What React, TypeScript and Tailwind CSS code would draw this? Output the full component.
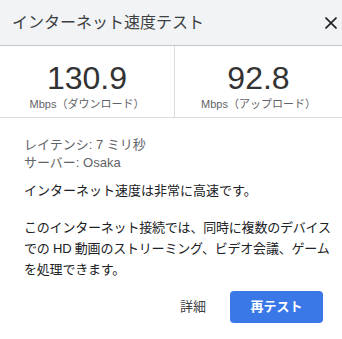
import React from 'react';

const jp = { fontFamily: '"Liberation Sans", "Noto Sans CJK JP", sans-serif' };

const Stat: React.FC<{ value: string; label: string; className?: string }> = ({ value, label, className }) => (
  <div className={`flex flex-col items-center pt-[16px] ${className ?? ''}`}>
    <div className="text-[32px] leading-[32px] text-[#333333]">{value}</div>
    <div className="mt-[3px] text-[11px] leading-[14px] text-[#5f6368]">{label}</div>
  </div>
);

export default function App() {
  return (
    <div className="w-[342px] h-[339px] bg-white" style={jp}>
      <div className="flex h-[46px] items-center justify-between border-b border-[#c6c6c6] bg-[#f1f3f4] pl-3">
        <span className="text-[16px] text-[#3c4043]">インターネット速度テスト</span>
        <button className="flex h-8 w-[22px] items-center justify-center">
          <svg width="12" height="12" viewBox="0 0 12 12" fill="none" stroke="#202124" strokeWidth="1.6">
            <path d="M0.5 0.5L11.5 11.5M11.5 0.5L0.5 11.5" />
          </svg>
        </button>
      </div>

      <div className="flex h-[72px] border-b border-[#dadce0]">
        <Stat value="130.9" label="Mbps（ダウンロード）" className="w-[175px] border-r border-[#dadce0]" />
        <Stat value="92.8" label="Mbps（アップロード）" className="flex-1" />
      </div>

      <div className="pl-6 pr-4 pt-[18px] text-[13px]">
        <div className="leading-[18px] text-[#5f6368]">
          <div>レイテンシ: 7 ミリ秒</div>
          <div>サーバー: Osaka</div>
        </div>
        <p className="mt-[9px] leading-[20px] text-[#202124]">インターネット速度は非常に高速です。</p>
        <p className="mt-[16px] whitespace-nowrap leading-[21px] text-[#202124] tracking-[-0.2px]">
          このインターネット接続では、同時に複数のデバイス
          <br />
          での HD 動画のストリーミング、ビデオ会議、ゲーム
          <br />
          を処理できます。
        </p>
        <div className="mt-[11px] flex items-center justify-end gap-6">
          <button className="text-[13px] text-[#3c4043]">詳細</button>
          <button className="mr-[3px] h-8 w-[93px] rounded bg-[#3b78e7] text-[13px] font-bold text-white">
            再テスト
          </button>
        </div>
      </div>
    </div>
  );
}
